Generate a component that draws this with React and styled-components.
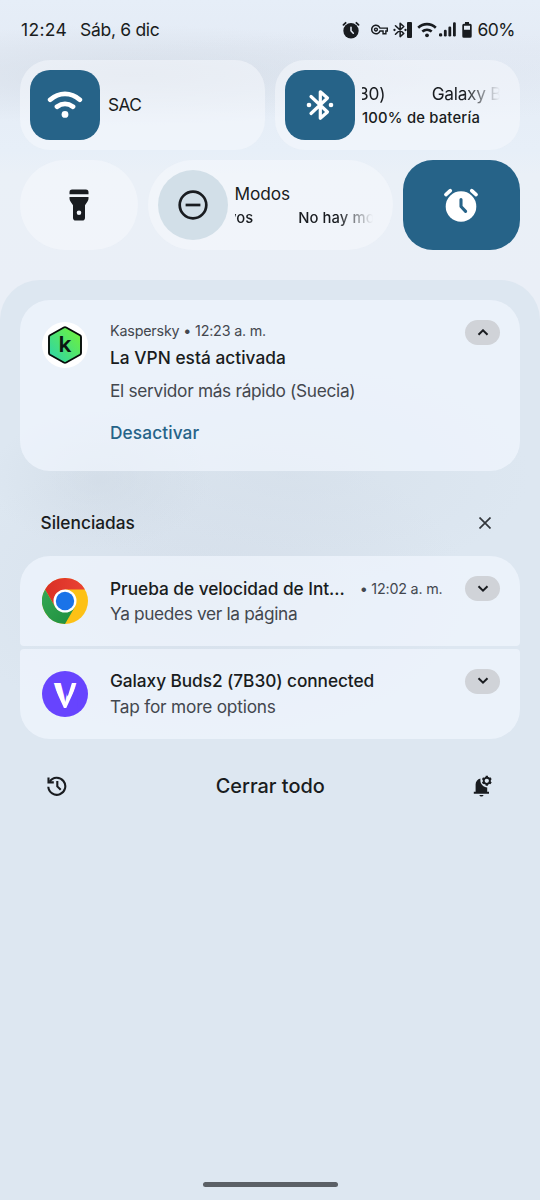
import React from "react";
import styled, { createGlobalStyle } from "styled-components";
import { MdOutlineVpnKey } from "react-icons/md";

const GlobalStyle = createGlobalStyle`
  * {
    box-sizing: border-box;
  }
  body {
    margin: 0;
    font-family: "Inter", "Roboto", sans-serif;
    color: #191c20;
  }
  svg {
    display: block;
    flex: none;
  }
`;

//icons
const AlarmIcon = ({ size, hand }) => (
  <svg width={size} height={size} viewBox="0 0 36 36">
    <circle cx="18" cy="19.5" r="15.3" fill="currentColor" />
    <path
      d="M2.9 7.6 7.3 3.6M33.1 7.6 28.7 3.6"
      stroke="currentColor"
      strokeWidth="3.6"
      strokeLinecap="round"
    />
    <path
      d="M18 12.5V19.5L22.6 24.4"
      fill="none"
      stroke={hand}
      strokeWidth="3.1"
      strokeLinecap="round"
      strokeLinejoin="round"
    />
  </svg>
);

const BluetoothIcon = ({ width, height }) => (
  <svg width={width} height={height} viewBox="0 0 28 32">
    <path
      d="M5 7.5 21.5 23 14.3 29.2V2.8L21.5 9 5 24.5"
      fill="none"
      stroke="currentColor"
      strokeWidth="3.2"
      strokeLinejoin="round"
      strokeLinecap="round"
    />
    <circle cx="3" cy="16" r="2.3" fill="currentColor" />
    <circle cx="25" cy="16" r="2.3" fill="currentColor" />
  </svg>
);

const WifiIcon = () => (
  <svg width="36" height="28" viewBox="0 0 36 28">
    <path
      d="M3.2 8.7C12 .8 24 .8 32.8 8.7M10 15.7C15 12.2 21 12.2 26 15.7"
      fill="none"
      stroke="#fff"
      strokeWidth="4.8"
      strokeLinecap="round"
    />
    <circle cx="18" cy="23.4" r="3.4" fill="#fff" />
  </svg>
);

const StatusWifiIcon = () => (
  <svg width="20" height="16" viewBox="0 0 20 16">
    <path
      d="M1.2 5.7C6.3.9 13.7.9 18.8 5.7M5.3 9.6C8 7.3 12 7.3 14.7 9.6"
      fill="none"
      stroke="currentColor"
      strokeWidth="2.6"
    />
    <circle cx="10" cy="13.3" r="1.9" fill="currentColor" />
  </svg>
);

const SignalIcon = () => (
  <svg width="17" height="15" viewBox="0 0 17 15" fill="currentColor">
    <rect x="0" y="11.3" width="3.2" height="3.2" rx="1.3" />
    <rect x="4.9" y="7.8" width="2.8" height="6.7" rx="1.2" />
    <rect x="9.4" y="4.5" width="2.8" height="10" rx="1.2" />
    <rect x="14" y="0.3" width="2.8" height="14.2" rx="1.2" />
  </svg>
);

const BatteryIcon = () => (
  <svg width="10" height="16" viewBox="0 0 10 16">
    <path
      d="M3 0h4v1.7h1.2Q9.7 1.7 9.7 3.2v11q0 1.5-1.5 1.5H1.8Q.3 15.7.3 14.2v-11Q.3 1.7 1.8 1.7H3zM2 3.7v4h6v-4z"
      fill="currentColor"
      fillRule="evenodd"
    />
  </svg>
);

const TorchIcon = () => (
  <svg width="20" height="32" viewBox="0 0 20 32" fill="currentColor">
    <path d="M.5 5.2V3.1Q.5.5 3.1.5h13.8q2.6 0 2.6 2.6v2.1z" />
    <path
      d="M.5 8h19v1.6q0 1.6-1 3L16 16.2v12.5q0 2.8-2.8 2.8H6.8Q4 31.5 4 28.7V16.2L1.5 12.6q-1-1.4-1-3zM10 21.5a2.3 2.3 0 1 0 0 4.6 2.3 2.3 0 0 0 0-4.6z"
      fillRule="evenodd"
    />
  </svg>
);

const ModesIcon = () => (
  <svg width="30" height="30" viewBox="0 0 30 30" fill="none" stroke="currentColor">
    <circle cx="15" cy="15" r="13.3" strokeWidth="2.7" />
    <path d="M7.6 15h14.8" strokeWidth="2.7" />
  </svg>
);

const HistoryIcon = () => (
  <svg width="20" height="20" viewBox="0 0 20 20" fill="none" stroke="currentColor" strokeWidth="2.1">
    <path d="M1.3 10.8A8.5 8.5 0 1 0 2.7 5.6" />
    <path d="M1.5 1.4V6.4H6.8" />
    <path d="M10.3 5V10.4L13.7 13.7" />
  </svg>
);

const BellGearIcon = () => (
  <svg width="20" height="22" viewBox="0 0 20 22">
    <path
      d="M7.4 3.6C4.4 4.3 2.6 6.6 2.6 9.6V16.8H.8V18.8H16V16.8H14.2V12.6C10.6 12 7.4 9.2 7.4 5.4z"
      fill="currentColor"
    />
    <path d="M6.3 19.9H10.6Q10 21.5 8.4 21.5T6.3 19.9z" fill="currentColor" />
    <circle cx="13.8" cy="5.8" r="3.1" fill="none" stroke="currentColor" strokeWidth="1.9" />
    <path
      d="M13.8.8V3M13.8 8.6V10.8M9.5 3.3 11.3 4.4M16.3 7.2 18.1 8.3M9.5 8.3 11.3 7.2M16.3 4.4 18.1 3.3"
      stroke="currentColor"
      strokeWidth="2.3"
    />
  </svg>
);

const CloseIcon = () => (
  <svg width="12" height="12" viewBox="0 0 12 12">
    <path d="M.5.5 11.5 11.5M11.5.5.5 11.5" stroke="#33373c" strokeWidth="1.7" />
  </svg>
);

const KasperskyLogo = () => (
  <svg width="46" height="46" viewBox="0 0 46 46">
    <defs>
      <linearGradient id="hex" x1="0" y1="1" x2="1" y2="0">
        <stop offset="0.1" stopColor="#2fd6a4" />
        <stop offset="0.85" stopColor="#69ef45" />
      </linearGradient>
    </defs>
    <circle cx="23" cy="23" r="23" fill="#fff" />
    <path
      d="M21.8 5.5Q23 4.8 24.2 5.5L38 13.2Q39 13.8 39 15V31Q39 32.2 38 32.8L24.2 40.5Q23 41.2 21.8 40.5L8 32.8Q7 32.2 7 31V15Q7 13.8 8 13.2z"
      fill="url(#hex)"
      stroke="#070d0a"
      strokeWidth="1.9"
    />
    <text
      x="16.6"
      y="30"
      textLength="13"
      lengthAdjust="spacingAndGlyphs"
      fontFamily="Inter, sans-serif"
      fontSize="22"
      fontWeight="600"
      fill="#0a1512"
    >
      k
    </text>
  </svg>
);

const ChromeLogo = () => (
  <svg width="46" height="46" viewBox="0 0 46 46">
    <defs>
      <linearGradient id="red" x1="0" y1="0" x2="1" y2="0">
        <stop offset="0" stopColor="#d93025" />
        <stop offset="1" stopColor="#ea4335" />
      </linearGradient>
      <linearGradient id="green" x1="1" y1="1" x2="0" y2="0">
        <stop offset="0" stopColor="#1e8e3e" />
        <stop offset="1" stopColor="#34a853" />
      </linearGradient>
    </defs>
    <circle cx="23" cy="23" r="23" fill="#fdc116" />
    <path d="M3.08 11.5A23 23 0 0 1 42.92 11.5H23L13.04 28.75z" fill="url(#red)" />
    <path d="M3.08 11.5A23 23 0 0 0 23 46L32.96 28.75 23 28 13.04 28.75z" fill="url(#green)" />
    <circle cx="23" cy="23" r="11.5" fill="#fff" />
    <circle cx="23" cy="23" r="9.2" fill="#1a73e8" />
  </svg>
);

// the right arm is thinner than the left one and the tip is sharp
const WearableLogo = () => (
  <svg width="46" height="46" viewBox="0 0 46 46">
    <circle cx="23" cy="23" r="23" fill="#6744fe" />
    <text
      x="11.2"
      y="36.6"
      textLength="23.6"
      lengthAdjust="spacingAndGlyphs"
      fontFamily="Inter, sans-serif"
      fontSize="34.4"
      fontWeight="900"
      fill="#fff"
    >
      V
    </text>
    <path d="M20.5 11 25.7 25.5 30.2 11zM11 13 22.4 38H11zM35.2 13 23.8 38H35z" fill="#6744fe" />
  </svg>
);

const Toggle = ({ open }) => (
  <ToggleButton>
    <svg width="12" height="8" viewBox="0 0 12 8">
      <path
        d={open ? "M1.5 5.8 6 1.3 10.5 5.8" : "M1.5 1.2 6 5.7 10.5 1.2"}
        fill="none"
        stroke="#191c20"
        strokeWidth="2"
      />
    </svg>
  </ToggleButton>
);

const App = () => {
  return (
    <Screen>
      <GlobalStyle />
      <StatusBar>
        <Clock>
          <Text $size={17.5} $track={0.3}>12:24</Text>
          <Text $size={17.5} $track={-0.3}>Sáb, 6 dic</Text>
        </Clock>
        <StatusIcons>
          <AlarmIcon size={18} hand="#e4ebf5" />
          <KeyBox>
            <MdOutlineVpnKey size={17} />
          </KeyBox>
          <BudsStatus>
            <BluetoothIcon width={14} height={16} />
            <BudsLevel />
          </BudsStatus>
          <Reception>
            <StatusWifiIcon />
            <SignalIcon />
          </Reception>
          <BatteryIcon />
          <Text $size={17.5} $track={-0.5}>60%</Text>
        </StatusIcons>
      </StatusBar>

      <QuickSettings>
        <WideRow>
          <Tile>
            <TileIcon $active>
              <WifiIcon />
            </TileIcon>
            <Network>
              <Text $size={17.3} $track={-0.6}>SAC</Text>
            </Network>
          </Tile>
          <Tile>
            <TileIcon $active>
              <BluetoothIcon width={28} height={32} />
            </TileIcon>
            <Marquee>
              <MarqueeLine $gap={46.5} $shift={4} $fade>
                <Text $size={17.3} $track={-0.2}>30)</Text>
                <Text $size={17.3} $track={-0.3}>Galaxy Buds2</Text>
              </MarqueeLine>
              <MarqueeLine>
                <Text $size={14.8} $weight={500} $track={0.2}>100% de batería</Text>
              </MarqueeLine>
            </Marquee>
          </Tile>
        </WideRow>
        <MixedRow>
          <RoundTile>
            <TorchIcon />
          </RoundTile>
          <Tile $round>
            <TileIcon>
              <ModesIcon />
            </TileIcon>
            <Marquee>
              <MarqueeLine>
                <Text $size={17.3} $track={-0.1}>Modos</Text>
              </MarqueeLine>
              <MarqueeLine $gap={45} $shift={6.5} $fade>
                <Text $size={14.8} $weight={500}>vos</Text>
                <Text $size={14.8} $weight={500} $track={0.1}>No hay modos activos</Text>
              </MarqueeLine>
            </Marquee>
          </Tile>
          <RoundTile $active>
            <AlarmIcon size={36} hand="#266388" />
          </RoundTile>
        </MixedRow>
      </QuickSettings>

      <Shade>
        <Card $height={171}>
          <AppIcon>
            <KasperskyLogo />
          </AppIcon>
          <Body>
            <Line $height={21}>
              <Text $size={14.3} $track={-0.18} $soft>Kaspersky • 12:23 a. m.</Text>
            </Line>
            <Line $height={32}>
              <Text $size={17.3} $weight={500} $track={0.03}>La VPN está activada</Text>
            </Line>
            <Line $height={35}>
              <Text $size={17.3} $track={-0.31} $soft>El servidor más rápido (Suecia)</Text>
            </Line>
            <Line $height={49}>
              <Action $size={17.3} $weight={500} $track={0.1}>Desactivar</Action>
            </Line>
          </Body>
          <Toggle open />
        </Card>

        <SectionHeader>
          <Text $size={17.3} $weight={500}>Silenciadas</Text>
          <CloseIcon />
        </SectionHeader>

        <Group>
          <Card $height={90} $place="first">
            <AppIcon>
              <ChromeLogo />
            </AppIcon>
            <Body>
              <Line $height={25} $gap={15}>
                <Text $size={17.3} $weight={500} $track={-0.04}>Prueba de velocidad de Int...</Text>
                <Text $size={14.3} $track={-0.2} $soft>• 12:02 a. m.</Text>
              </Line>
              <Line $height={25}>
                <Text $size={17.3} $track={-0.35} $soft>Ya puedes ver la página</Text>
              </Line>
            </Body>
            <Toggle />
          </Card>
          <Card $height={90.5} $place="last">
            <AppIcon>
              <WearableLogo />
            </AppIcon>
            <Body>
              <Line $height={24}>
                <Text $size={17.3} $weight={500} $track={-0.08}>Galaxy Buds2 (7B30) connected</Text>
              </Line>
              <Line $height={27}>
                <Text $size={17.3} $track={-0.2} $soft>Tap for more options</Text>
              </Line>
            </Body>
            <Toggle />
          </Card>
        </Group>

        <Footer>
          <HistoryIcon />
          <Text $size={19.9} $weight={500}>Cerrar todo</Text>
          <BellGearIcon />
        </Footer>
        <NavHandle />
      </Shade>
    </Screen>
  );
};

//styles
const Screen = styled.div`
  display: flex;
  flex-direction: column;
  width: 540px;
  height: 1200px;
  overflow: hidden;
  background:
    radial-gradient(ellipse 300px 50px at 130px 75px, rgba(209, 217, 227, 0.65), transparent),
    radial-gradient(ellipse 350px 45px at 400px 75px, rgba(216, 223, 234, 0.35), transparent),
    linear-gradient(#e6eef8 0, #e4ebf5 50px, #e7eff8 150px, #eaf0f7 175px, #eaeff7 280px);
`;

const Text = styled.span`
  font-size: ${(p) => p.$size}px;
  font-weight: ${(p) => p.$weight || 400};
  letter-spacing: ${(p) => p.$track || 0}px;
  color: ${(p) => (p.$soft ? "#43474e" : "#191c20")};
  white-space: nowrap;
`;

const Action = styled(Text)`
  color: #266388;
`;

const StatusBar = styled.header`
  display: flex;
  align-items: center;
  justify-content: space-between;
  height: 60px;
  padding: 0 25px 1px 21px;
`;

const Clock = styled.div`
  display: flex;
  gap: 13px;
`;

const StatusIcons = styled.div`
  display: flex;
  align-items: center;
  gap: 5px;
`;

const KeyBox = styled.div`
  margin-left: 6px;
`;

const BudsStatus = styled.div`
  display: flex;
  align-items: center;
`;

const BudsLevel = styled.i`
  width: 5px;
  height: 16px;
  border-radius: 1px;
  background: #191c20;
`;

const Reception = styled.div`
  display: flex;
  align-items: center;
  gap: 2px;
  padding-right: 1px;
`;

const QuickSettings = styled.section`
  display: grid;
  gap: 10px;
  padding: 0 20px 30px;
`;

const WideRow = styled.div`
  display: grid;
  grid-template-columns: 245px 245px;
  gap: 10px;
`;

const MixedRow = styled.div`
  display: grid;
  grid-template-columns: 117.5px 245px 117.5px;
  gap: 10px;
`;

const Tile = styled.div`
  display: flex;
  align-items: center;
  height: 90px;
  padding: 0 20px 0 10px;
  border-radius: ${(p) => (p.$round ? 45 : 30)}px;
  background: rgba(248, 250, 253, 0.5);
`;

const TileIcon = styled.div`
  display: grid;
  place-items: center;
  flex: none;
  width: 70px;
  height: 70px;
  border-radius: ${(p) => (p.$active ? 20 : 35)}px;
  color: ${(p) => (p.$active ? "#fff" : "#191c20")};
  background: ${(p) => (p.$active ? "#266388" : "#d2dfe8")};
`;

const RoundTile = styled.div`
  display: grid;
  place-items: center;
  height: 90px;
  border-radius: ${(p) => (p.$active ? 30 : 45)}px;
  color: ${(p) => (p.$active ? "#fff" : "#191c20")};
  background: ${(p) => (p.$active ? "#266388" : "rgba(248, 250, 253, 0.5)")};
`;

const Network = styled.div`
  padding: 0 0 2px 8px;
`;

const Marquee = styled.div`
  flex: 1;
  min-width: 0;
  padding-top: 2px;
  margin-left: 7px;
`;

const MarqueeLine = styled.div`
  display: flex;
  gap: ${(p) => p.$gap || 0}px;
  height: 24px;
  line-height: 24px;
  overflow: hidden;
  ${(p) => p.$fade && "mask-image: linear-gradient(to left, transparent, #000 36px);"}

  > :first-child {
    margin-left: ${(p) => -(p.$shift || 0)}px;
  }
`;

const Shade = styled.main`
  display: flex;
  flex-direction: column;
  flex: 1;
  padding: 20px 20px 13px;
  border-radius: 40px 40px 0 0;
  background:
    radial-gradient(ellipse 110px 70px at 100px 200px, rgba(203, 213, 224, 0.45), transparent),
    radial-gradient(ellipse 240px 110px at 290px 195px, rgba(208, 218, 229, 0.4), transparent),
    radial-gradient(ellipse 260px 150px at 210px 310px, rgba(206, 215, 228, 0.45), transparent),
    #dde7f1;
`;

const radii = {
  first: "30px 30px 4px 4px",
  last: "4px 4px 30px 30px",
};

const Card = styled.article`
  display: flex;
  height: ${(p) => p.$height}px;
  padding: 20px 20px 0 22px;
  border-radius: ${(p) => radii[p.$place] || "30px"};
  background: rgba(242, 247, 255, 0.65);
`;

const AppIcon = styled.div`
  width: 68px;
  padding-top: 2px;
`;

const Body = styled.div`
  flex: 1;
  min-width: 0;
`;

const Line = styled.div`
  display: flex;
  align-items: center;
  gap: ${(p) => p.$gap || 0}px;
  height: ${(p) => p.$height}px;
`;

const ToggleButton = styled.button`
  display: grid;
  place-items: center;
  width: 35px;
  height: 25px;
  padding: 0;
  border: 0;
  border-radius: 12.5px;
  background: #d0d3d8;
`;

const SectionHeader = styled.div`
  display: flex;
  align-items: center;
  justify-content: space-between;
  height: 85px;
  padding: 18px 29px 0 20.5px;
`;

const Group = styled.div`
  display: grid;
  gap: 2.5px;
`;

const Footer = styled.footer`
  display: flex;
  align-items: center;
  justify-content: space-between;
  height: 93px;
  padding: 0 26.5px 0 27px;
`;

const NavHandle = styled.div`
  width: 135px;
  height: 5px;
  margin: auto auto 0;
  border-radius: 3px;
  background: #5b6066;
`;

export default App;
